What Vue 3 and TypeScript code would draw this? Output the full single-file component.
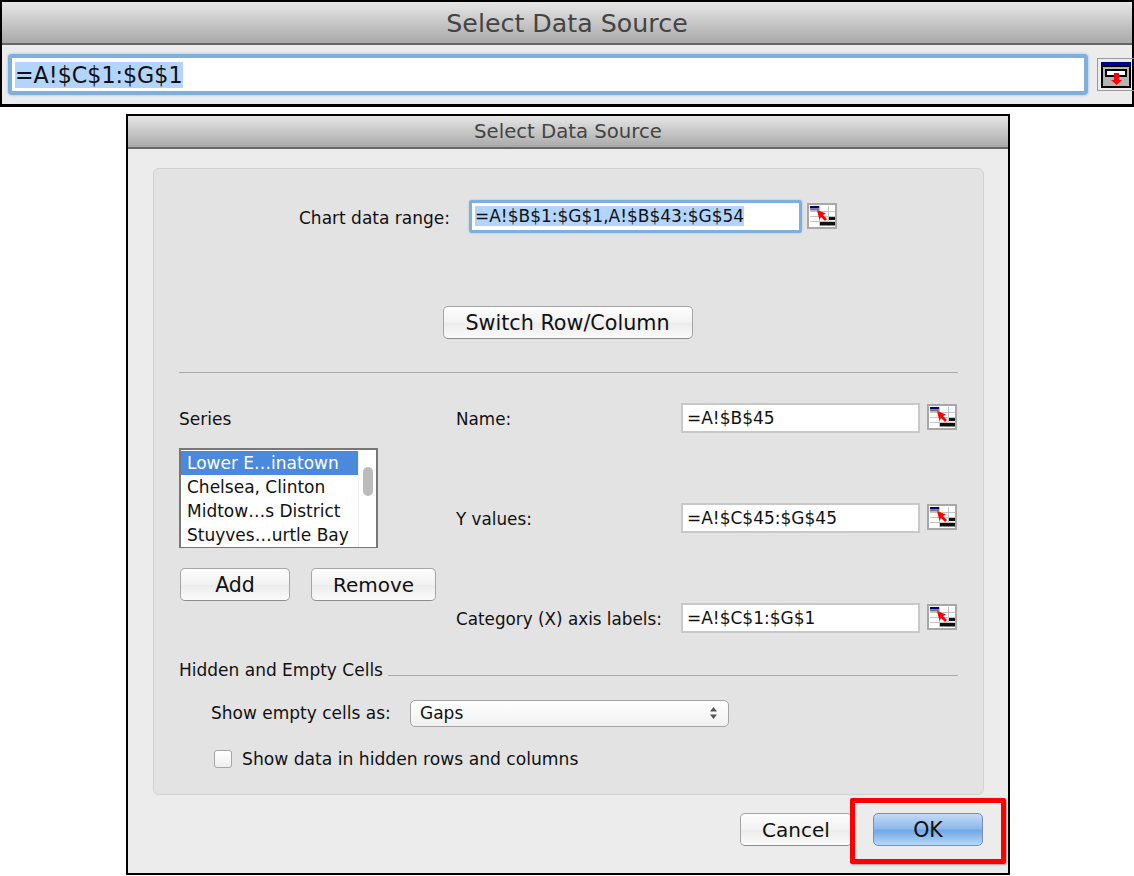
<script setup lang="ts">
const fields = [
  { label: 'Name:', value: '=A!$B$45' },
  { label: 'Y values:', value: '=A!$C$45:$G$45' },
  { label: 'Category (X) axis labels:', value: '=A!$C$1:$G$1' },
]
const series = ['Lower E…inatown', 'Chelsea, Clinton', 'Midtow…s District', 'Stuyves…urtle Bay']
</script>

<template>
  <div class="page">
    <section class="top">
      <header class="top-title">Select Data Source</header>
      <div class="top-body">
        <div class="top-field"><span class="sel">=A!$C$1:$G$1</span></div>
        <div class="top-btn">
          <svg width="30" height="26" viewBox="0 0 30 26">
            <rect x="0" y="0" width="30" height="4" fill="#00008a" />
            <rect x="1" y="4" width="28" height="21" fill="#b4b4b4" stroke="#000" stroke-width="2" />
            <rect x="5" y="8" width="20" height="6" fill="#fff" stroke="#000" stroke-width="2" />
            <path d="M13 11h5v7h3l-5.500 5-5.500-5h3z" fill="#f00" />
          </svg>
        </div>
      </div>
    </section>

    <section class="dialog">
      <header class="title">Select Data Source</header>
      <div class="content">
        <div class="panel">
          <div class="range-row">
            <label class="range-label">Chart data range:</label>
            <div class="range-input"><span class="sel">=A!$B$1:$G$1,A!$B$43:$G$54</span></div>
            <svg class="picker" width="30" height="26" viewBox="0 0 30 26">
              <rect x="1" y="1" width="28" height="24" fill="#fff" stroke="#a8a8a8" stroke-width="2" />
              <path d="M3 8.500h25M3 13.500h25M3 18.500h25M12.500 3v20M21.500 3v20" stroke="#c4c4c4" fill="none" />
              <rect x="3" y="3" width="9" height="2.500" fill="#00007a" />
              <rect x="3" y="6" width="9" height="1.500" fill="#777" />
              <path d="M10 7l9 3.500-3 1.500 4 4-2 2-4-4-1.500 3z" fill="#f00" />
              <rect x="22" y="14" width="6" height="3" fill="#111" />
              <rect x="13" y="19" width="15" height="3.500" fill="#111" />
            </svg>
          </div>
          <div class="switch-row"><button class="btn switch">Switch Row/Column</button></div>
          <hr class="rule" />
          <div class="columns">
            <div class="left">
              <div class="series-label">Series</div>
              <div class="list">
                <div class="items">
                  <div v-for="(s, i) in series" :key="s" class="item" :class="{ active: i === 0 }">{{ s }}</div>
                </div>
                <div class="track"><div class="thumb"></div></div>
              </div>
              <div class="list-btns">
                <button class="btn add">Add</button>
                <button class="btn remove">Remove</button>
              </div>
            </div>
            <div class="right">
              <div v-for="f in fields" :key="f.label" class="field">
                <label class="field-label">{{ f.label }}</label>
                <div class="field-input">{{ f.value }}</div>
                <svg class="picker wide" width="30" height="26" viewBox="0 0 30 26">
                  <rect x="1" y="1" width="28" height="24" fill="#fff" stroke="#a8a8a8" stroke-width="2" />
                  <path d="M3 8.500h25M3 13.500h25M3 18.500h25M12.500 3v20M21.500 3v20" stroke="#c4c4c4" fill="none" />
                  <rect x="3" y="3" width="9" height="2.500" fill="#00007a" />
                  <rect x="3" y="6" width="9" height="1.500" fill="#777" />
                  <path d="M10 7l9 3.500-3 1.500 4 4-2 2-4-4-1.500 3z" fill="#f00" />
                  <rect x="22" y="14" width="6" height="3" fill="#111" />
                  <rect x="13" y="19" width="15" height="3.500" fill="#111" />
                </svg>
              </div>
            </div>
          </div>
          <div class="legend"><span>Hidden and Empty Cells</span><i></i></div>
          <div class="empty-row">
            <label class="empty-label">Show empty cells as:</label>
            <div class="select">
              <span>Gaps</span>
              <svg width="9" height="14" viewBox="0 0 9 14"><path d="M4.500 1l3.500 4.500h-7zM4.500 13l-3.500-4.500h7z" fill="#555" /></svg>
            </div>
          </div>
          <div class="check-row">
            <span class="check"></span>
            <span class="check-text">Show data in hidden rows and columns</span>
          </div>
        </div>
        <div class="actions">
          <button class="btn cancel">Cancel</button>
          <button class="btn ok">OK</button>
        </div>
      </div>
      <div class="highlight"></div>
    </section>
  </div>
</template>

<style>
html, body { margin: 0; background: #fff; }
</style>

<style scoped>
.page {
  width: 1134px;
  height: 876px;
  overflow: hidden;
  font-family: "DejaVu Sans", sans-serif;
  color: #111;
  box-sizing: border-box;
}
.top {
  height: 107px;
  box-sizing: border-box;
  border: 2px solid #000;
  border-bottom-width: 3px;
  background: #ececec;
  display: flex;
  flex-direction: column;
}
.top-title {
  height: 43px;
  box-sizing: border-box;
  border-bottom: 2px solid #666;
  background: linear-gradient(#e6e6e6, #a9a9a9);
  text-align: center;
  font-size: 25.300px;
  line-height: 43px;
  color: #444;
}
.top-body {
  flex: 1;
  display: flex;
  align-items: center;
  padding: 0 0 0 6px;
  gap: 9px;
}
.top-field {
  width: 1080px;
  height: 41px;
  box-sizing: border-box;
  background: #fff;
  border: 4px solid #7fb0dc;
  border-radius: 4px;
  box-shadow: 0 0 3px #8fbce4;
  padding: 4px 3px 2px;
  font-size: 22.200px;
  line-height: 27px;
  white-space: nowrap;
  flex: none;
}
.top-btn {
  flex: none;
  width: 37px;
  height: 33px;
  box-sizing: border-box;
  border: 1px solid #999;
  border-right: 0;
  padding: 3px 0 0 3px;
  overflow: hidden;
}
.top-btn svg { display: block; }
.sel { background: #b3d4fc; }
.dialog {
  position: relative;
  margin: 7px 0 0 126px;
  width: 884px;
  height: 761px;
  box-sizing: border-box;
  border: 2px solid #000;
  background: #ececec;
  display: flex;
  flex-direction: column;
}
.title {
  height: 33px;
  box-sizing: border-box;
  border-bottom: 2px solid #666;
  background: linear-gradient(#e6e6e6, #a9a9a9);
  text-align: center;
  font-size: 19.700px;
  line-height: 31px;
  color: #444;
}
.content {
  padding: 19px 24px 0 25px;
  flex: 1;
}
.panel {
  height: 627px;
  box-sizing: border-box;
  background: #e3e3e3;
  border: 1px solid #d2d2d2;
  border-radius: 6px;
  padding: 33px 25px 0;
  font-size: 17px;
}
.range-row {
  display: flex;
  align-items: center;
  height: 30px;
  padding-left: 120px;
}
.range-label { width: 170px; white-space: nowrap; padding-top: 1px; }
.range-input {
  width: 333px;
  height: 33px;
  margin-bottom: 2px;
  box-sizing: border-box;
  background: #fff;
  border: 3px solid #7fb0dc;
  border-radius: 3px;
  box-shadow: 0 0 2px #8fbce4;
  padding: 3px 3px;
  line-height: 21px;
  white-space: nowrap;
}
.picker { display: block; flex: none; margin: 0 0 3px 5px; }
.picker.wide { margin: 0 0 2px 7px; }
.switch-row {
  display: flex;
  justify-content: center;
  margin-top: 74px;
  padding-right: 2px;
}
.btn {
  display: block;
  box-sizing: border-box;
  font: inherit;
  color: #111;
  padding: 0;
  background: linear-gradient(#fdfdfd 0%, #f2f2f2 50%, #ececec 52%, #fafafa 100%);
  border: 1px solid #a5a5a5;
  border-bottom-color: #8d8d8d;
  border-radius: 5px;
}
.switch { width: 250px; height: 33px; font-size: 20.700px; }
.rule {
  margin: 33px 0 0;
  border: 0;
  border-top: 1px solid #a9a9a9;
}
.columns {
  display: flex;
  height: 270px;
}
.left { width: 277px; flex: none; }
.series-label { margin-top: 36px; line-height: 21px; }
.list {
  margin-top: 18px;
  width: 199px;
  height: 100px;
  box-sizing: border-box;
  border: 2px solid #777;
  border-bottom-width: 1px;
  background: #fff;
  display: flex;
}
.items { flex: 1; padding-top: 1px; overflow: hidden; }
.item {
  height: 24px;
  line-height: 24px;
  padding-left: 6px;
  white-space: nowrap;
}
.item.active { background: #4a89dc; color: #fff; }
.track { width: 18px; flex: none; border-left: 1px solid #eee; padding-top: 17px; box-sizing: border-box; }
.thumb { width: 10px; height: 29px; margin-left: 4px; background: #bcbcbc; border-radius: 5px; }
.list-btns { display: flex; margin-top: 20px; padding-left: 1px; gap: 21px; }
.add { width: 110px; height: 33px; font-size: 20.500px; }
.remove { width: 125px; height: 33px; font-size: 20px; }
.right { flex: 1; padding-top: 30px; }
.field {
  display: flex;
  align-items: center;
  height: 30px;
  margin-bottom: 70px;
}
.field-label { width: 225px; white-space: nowrap; padding-top: 2px; font-size: 16.800px; }
.field-input {
  width: 239px;
  height: 30px;
  box-sizing: border-box;
  background: #fff;
  border: 2px solid #c8c8c8;
  padding-left: 4px;
  line-height: 27px;
}
.legend {
  display: flex;
  align-items: flex-end;
  margin-top: 16px;
  height: 23px;
  line-height: 23px;
}
.legend i {
  flex: 1;
  border-top: 1px solid #a9a9a9;
  margin: 0 0 6px 5px;
}
.empty-row {
  display: flex;
  align-items: center;
  margin-top: 17px;
  padding-left: 32px;
  height: 28px;
}
.empty-label { width: 199px; white-space: nowrap; }
.select {
  width: 319px;
  height: 27px;
  box-sizing: border-box;
  display: flex;
  align-items: center;
  justify-content: space-between;
  padding: 0 10px 0 9px;
  background: linear-gradient(#fff, #f0f0f0);
  border: 1px solid #a5a5a5;
  border-radius: 5px;
}
.check-row {
  display: flex;
  align-items: center;
  gap: 10px;
  margin-top: 21px;
  padding-left: 35px;
  height: 22px;
}
.check-text { font-size: 17.150px; }
.check {
  width: 18px;
  height: 18px;
  box-sizing: border-box;
  background: linear-gradient(#fff, #eee);
  border: 1px solid #a5a5a5;
  border-radius: 3px;
  flex: none;
}
.actions {
  display: flex;
  justify-content: flex-end;
  gap: 21px;
  margin-top: 18px;
  padding-right: 1px;
}
.cancel { width: 112px; height: 33px; font-size: 20px; }
.ok {
  width: 110px;
  height: 33px;
  font-size: 20.500px;
  border-color: #7f8db0;
  background: linear-gradient(#c5daf5 0%, #8db8ea 48%, #6fa6e6 52%, #b4d8f8 100%);
}
.highlight {
  position: absolute;
  left: 722px;
  top: 682px;
  width: 156px;
  height: 66px;
  box-sizing: border-box;
  border: 5px solid #f00;
  border-radius: 2px;
  box-shadow: 1px 1px 2px rgba(0, 0, 0, 0.35);
}
</style>
